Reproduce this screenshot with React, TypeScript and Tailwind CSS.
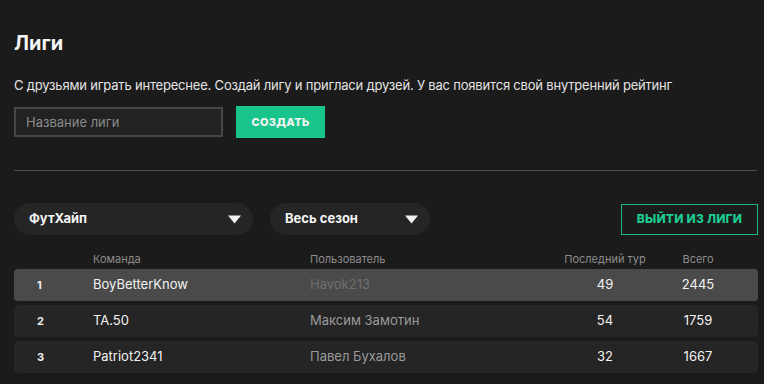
import { useState } from 'react';

type Row = { rank: number; team: string; user: string; last: number; total: number };

const rows: Row[] = [
  { rank: 1, team: 'BoyBetterKnow', user: 'Havok213', last: 49, total: 2445 },
  { rank: 2, team: 'TA.50', user: 'Максим Замотин', last: 54, total: 1759 },
  { rank: 3, team: 'Patriot2341', user: 'Павел Бухалов', last: 32, total: 1667 },
];

const Triangle = () => (
  <svg width="13" height="9" viewBox="0 0 13 9" className="shrink-0">
    <path d="M0 0.5 H13 L6.5 8.5 Z" fill="#f2f2f2" />
  </svg>
);

const Select = ({ label, width }: { label: string; width: string }) => (
  <div
    className={`${width} h-[32px] rounded-full bg-[#252525] flex items-center justify-between pl-[15px] pr-[12px]`}
  >
    <span className="text-[13px] font-bold text-[#f4f4f4]">{label}</span>
    <Triangle />
  </div>
);

const App = () => {
  const [name, setName] = useState('');

  return (
    <div
      className="w-[764px] h-[384px] overflow-hidden bg-[#1b1b1b] pl-[14px] pr-[6px] text-white"
      style={{ fontFamily: 'Inter, "Noto Sans", sans-serif' }}
    >
      <h1 className="pt-[29px] text-[20px] leading-[28px] font-bold text-[#f5f5f5]">Лиги</h1>

      <p className="mt-[18px] text-[13px] leading-[20px] tracking-[-0.015em] text-[#e4e4e4]">
        С друзьями играть интереснее. Создай лигу и пригласи друзей. У вас появится свой внутренний рейтинг
      </p>

      {/* Создание лиги */}
      <div className="mt-[11px] flex items-center gap-[13px]">
        <input
          value={name}
          onChange={(e) => setName(e.target.value)}
          placeholder="Название лиги"
          className="w-[209px] h-[30px] bg-[#222222] border-2 border-[#464646] px-[10px] text-[13px] text-white placeholder:text-[#8a8a8a] outline-none"
        />
        <button className="w-[89px] h-[32px] bg-[#19c48c] text-[11px] font-extrabold tracking-[0.03em] text-[#f4f4f4]">
          СОЗДАТЬ
        </button>
      </div>

      <div className="mt-[32px] h-px bg-[#4e4e4e] mr-px" />

      {/* Фильтры */}
      <div className="mt-[32px] flex items-center">
        <Select label="ФутХайп" width="w-[239px]" />
        <div className="ml-[17px]">
          <Select label="Весь сезон" width="w-[160px]" />
        </div>
        <button className="ml-auto w-[137px] h-[31px] border-[1.5px] border-[#17b884] text-[12px] font-extrabold tracking-[0.02em] text-[#1ccb91]">
          ВЫЙТИ ИЗ ЛИГИ
        </button>
      </div>

      {/* Таблица */}
      <div className="mt-[17px] mb-[3px] h-[14px] flex items-center text-[11px] leading-[14px] text-[#8c8c8c]">
        <div className="w-[79px]" />
        <div className="w-[217px]">Команда</div>
        <div className="w-[249px]">Пользователь</div>
        <div className="w-[92px] text-center">Последний тур</div>
        <div className="w-[94px] text-center">Всего</div>
      </div>

      <div className="flex flex-col gap-[4px]">
        {rows.map((r) => (
          <div
            key={r.rank}
            className={`h-[32px] rounded-[4px] flex items-center text-[13px] ${
              r.rank === 1 ? 'bg-[#4a4a4a]' : 'bg-[#252525]'
            }`}
          >
            <div className="w-[79px] pl-[23px] text-[11px] font-bold text-[#f2f2f2]">{r.rank}</div>
            <div className="w-[217px] text-[#f2f2f2]">{r.team}</div>
            <div className={`w-[249px] ${r.rank === 1 ? 'text-[#6e6e6e]' : 'text-[#9a9a9a]'}`}>{r.user}</div>
            <div className="w-[92px] text-center text-[#f2f2f2]">{r.last}</div>
            <div className="w-[94px] text-center text-[#f2f2f2]">{r.total}</div>
          </div>
        ))}
      </div>
    </div>
  );
};

export default App;
